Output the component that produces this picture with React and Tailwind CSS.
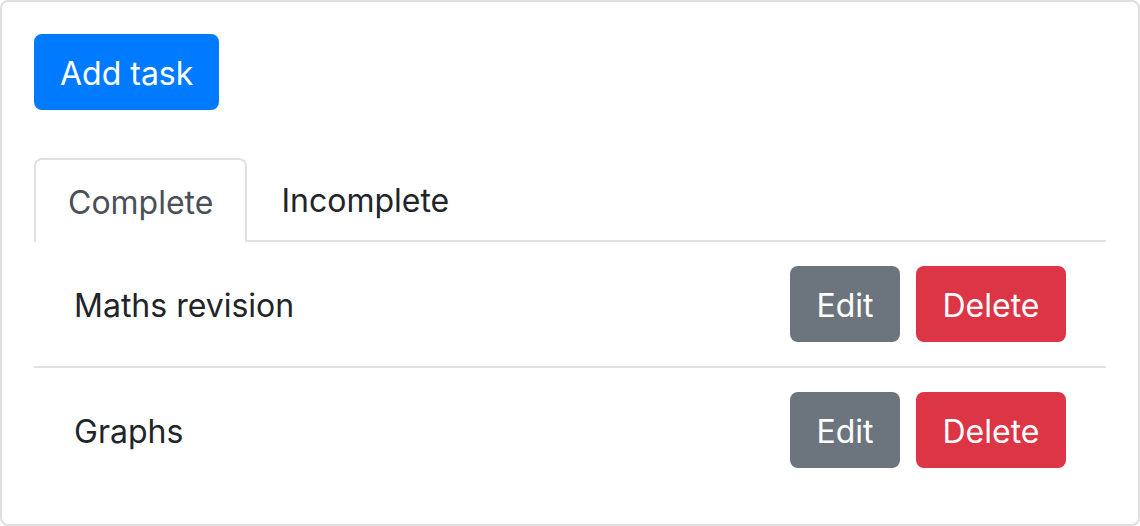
const tasks = ["Maths revision", "Graphs"];

export default function App() {
  return (
    <div
      className="w-[1140px] h-[526px] bg-white"
      style={{ fontFamily: "Inter, 'Noto Sans', sans-serif" }}
    >
      <div className="h-full border-2 border-[#dfdfdf] rounded-[8px] p-[32px] text-[#212529]">
        {/* ADD BUTTON */}
        <button className="h-[76px] px-[26px] pt-[4px] bg-[#007bff] text-white text-[32px] leading-[48px] rounded-[8px]">
          Add task
        </button>

        {/* TABS */}
        <div className="mt-[48px] flex border-b-2 border-[#dee2e6]">
          <div className="-mb-[2px] h-[84px] px-[32px] pt-[4px] flex items-center border-2 border-b-0 border-[#dee2e6] rounded-t-[8px] bg-white text-[#495057] text-[32px]">
            Complete
          </div>
          <div className="h-[82px] px-[34px] pt-[4px] flex items-center text-[32px] text-[#212529]">
            Incomplete
          </div>
        </div>

        {/* TASK LIST */}
        <div>
          {tasks.map((t, i) => (
            <div
              key={t}
              className={
                "flex items-center justify-between py-[24px] pl-[40px] pr-[40px] " +
                (i < tasks.length - 1 ? "border-b-2 border-[#dee2e6]" : "")
              }
            >
              <span className="pt-[4px] text-[32px] leading-[48px]">{t}</span>
              <div className="flex gap-[16px]">
                <button className="w-[110px] h-[76px] pt-[4px] bg-[#6c757d] text-white text-[32px] rounded-[8px]">
                  Edit
                </button>
                <button className="w-[150px] h-[76px] pt-[4px] bg-[#dc3545] text-white text-[32px] rounded-[8px]">
                  Delete
                </button>
              </div>
            </div>
          ))}
        </div>
      </div>
    </div>
  );
}
